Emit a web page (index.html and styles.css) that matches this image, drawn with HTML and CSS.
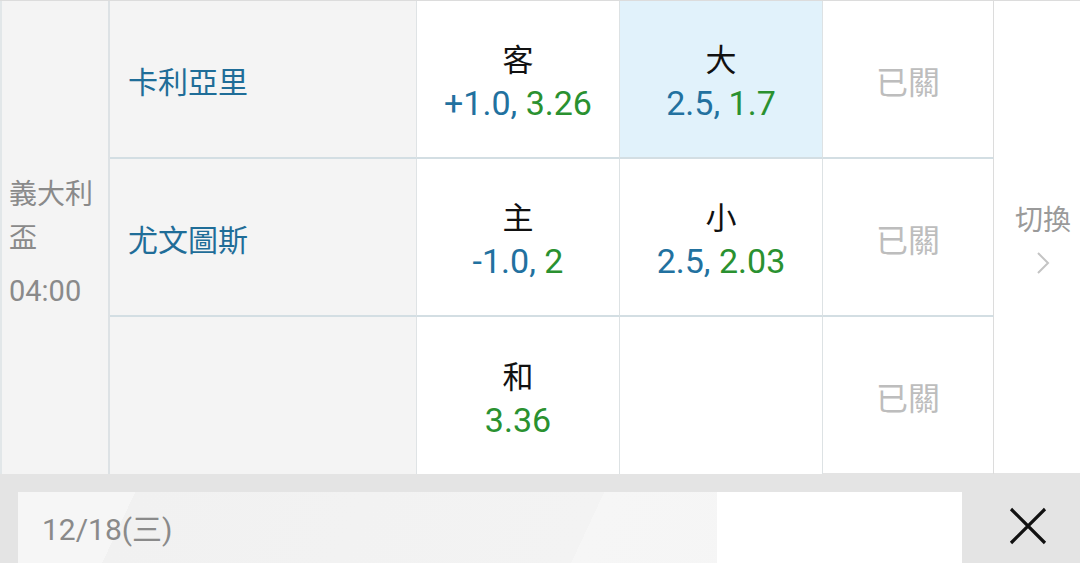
FILE: index.html
```html
<!DOCTYPE html>
<html lang="zh-Hant">
<head>
<meta charset="utf-8">
<link rel="stylesheet" href="styles.css">
</head>
<body>
<div class="board">
  <div class="cell league">
    <div class="league-name">義大利盃</div>
    <div class="league-time">04:00</div>
  </div>

  <div class="cell team r1">卡利亞里</div>
  <div class="cell odd r1"><div class="lbl">客</div><div class="val"><span class="hc">+1.0, </span><span class="pr">3.26</span></div></div>
  <div class="cell odd r1 sel"><div class="lbl">大</div><div class="val"><span class="hc">2.5, </span><span class="pr">1.7</span></div></div>
  <div class="cell closed r1">已關</div>

  <div class="cell switch">
    <div class="switch-text">切換</div>
    <svg class="chev" width="14" height="24" viewBox="0 0 14 24"><polyline points="2,2 12,12 2,22" fill="none" stroke="#c4c4c4" stroke-width="2"/></svg>
  </div>

  <div class="cell team r2">尤文圖斯</div>
  <div class="cell odd r2"><div class="lbl">主</div><div class="val"><span class="hc">-1.0, </span><span class="pr">2</span></div></div>
  <div class="cell odd r2"><div class="lbl">小</div><div class="val"><span class="hc">2.5, </span><span class="pr">2.03</span></div></div>
  <div class="cell closed r2">已關</div>

  <div class="cell team r3"></div>
  <div class="cell odd r3"><div class="lbl">和</div><div class="val"><span class="pr">3.36</span></div></div>
  <div class="cell odd r3"></div>
  <div class="cell closed r3">已關</div>
</div>

<div class="bottom">
  <div class="panel-wrap">
    <div class="panel">12/18(三)</div>
  </div>
  <div class="close">
    <svg width="40" height="40" viewBox="0 0 40 40"><path d="M3 3 L37 37 M37 3 L3 37" stroke="#111" stroke-width="3.2" fill="none"/></svg>
  </div>
</div>
</body>
</html>
```

FILE: styles.css
```css
* { box-sizing: border-box; }
html, body { margin: 0; padding: 0; }
body {
  width: 1080px;
  height: 563px;
  overflow: hidden;
  background: #ffffff;
  font-family: Roboto, "Noto Sans CJK TC", sans-serif;
}

.board {
  display: grid;
  grid-template-columns: 110px 307px 203px 203px 171px 86px;
  grid-template-rows: 158px 158px 157px;
  border-top: 1px solid #dcdcdc;
  height: 473px;
}

.cell {
  display: flex;
  align-items: center;
  padding-top: 6px;
}

.league {
  grid-row: 1 / 4;
  grid-column: 1;
  background: #f4f4f4;
  border-left: 2px solid #e2e7e9;
  border-right: 2px solid #dde2e5;
  flex-direction: column;
  align-items: flex-start;
  justify-content: center;
  padding: 10px 0 0 7px;
  color: #8a8a8a;
  font-size: 28px;
}
.league-name { line-height: 44px; width: 92px; }
.league-time { line-height: 44px; margin-top: 8px; font-size: 29px; }

.team {
  grid-column: 2;
  background: #f4f4f4;
  border-right: 1px solid #dfe3e5;
  padding-left: 18px;
  padding-top: 2px;
  font-size: 30px;
  color: #1f6d98;
}
.team.r1, .odd.r1, .closed.r1 { border-bottom: 2px solid #d3dee3; }
.team.r2, .odd.r2, .closed.r2 { border-bottom: 2px solid #d3dee3; }

.odd {
  flex-direction: column;
  justify-content: center;
  border-right: 1px solid #dde2e4;
  background: #ffffff;
}
.odd.sel { background: #e1f2fb; }
.lbl { font-size: 31px; line-height: 42px; color: #111; }
.val { font-size: 34px; line-height: 42px; }
.hc { color: #22719f; }
.pr { color: #2a9130; }

.closed {
  justify-content: center;
  border-right: 1px solid #dcdcdc;
  padding-top: 1px;
  font-size: 32px;
  color: #bdbdbd;
}

.switch {
  grid-row: 1 / 4;
  grid-column: 6;
  flex-direction: column;
  justify-content: center;
  padding: 0 0 0 12px;
  color: #9a9a9a;
  font-size: 28px;
}
.switch-text { line-height: 40px; }
.chev { margin-top: 10px; }

.bottom {
  display: flex;
  height: 90px;
  background: #e4e4e4;
}
.panel-wrap {
  width: 962px;
  padding: 19px 0 0 18px;
}
.panel {
  height: 71px;
  padding: 18px 0 0 24px;
  font-size: 30px;
  line-height: 40px;
  color: #8a8a8a;
  background:
    linear-gradient(to right, transparent 0, transparent 699px, #ffffff 699px),
    linear-gradient(115deg, #f6f6f6 0, #f6f6f6 12%, #f1f1f1 12%, #f3f3f3 60%, #f6f6f6 60%, #f4f4f4 100%);
}
.close {
  flex: 1;
  display: flex;
  align-items: center;
  justify-content: center;
  padding: 16px 0 0 14px;
}
```
